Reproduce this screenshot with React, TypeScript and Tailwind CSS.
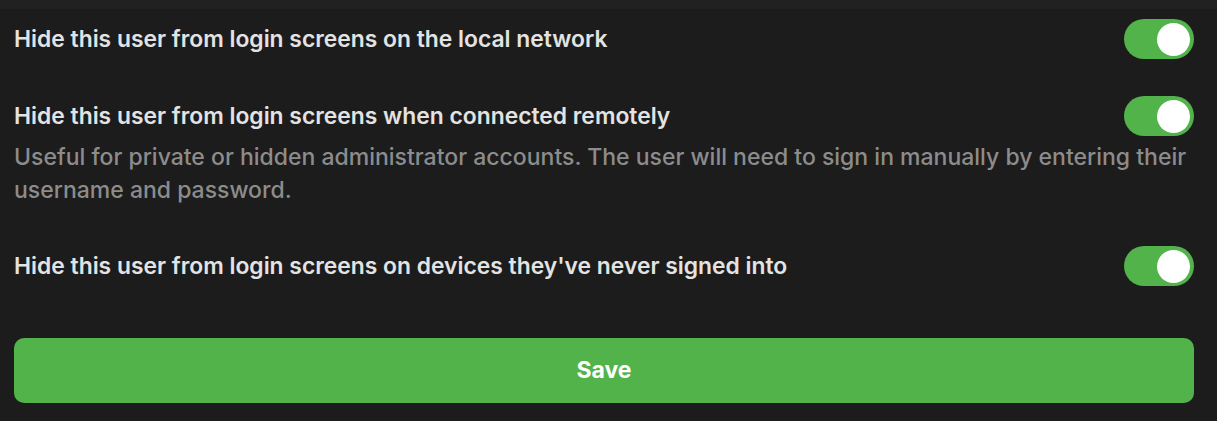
import React, { useState } from 'react';

interface ToggleProps {
  checked: boolean;
  onChange: (v: boolean) => void;
}

const Toggle: React.FC<ToggleProps> = ({ checked, onChange }) => (
  <button
    type="button"
    onClick={() => onChange(!checked)}
    className={`relative flex h-[40px] w-[70px] shrink-0 items-center rounded-full px-[4px] ${
      checked ? 'justify-end bg-[#52b34b]' : 'justify-start bg-[#444444]'
    }`}
  >
    <span className="block h-[33px] w-[33px] rounded-full bg-white" />
  </button>
);

export default function App() {
  const [local, setLocal] = useState(true);
  const [remote, setRemote] = useState(true);
  const [never, setNever] = useState(true);

  return (
    <div
      className="min-h-[421px] w-full bg-[#1c1c1c] text-[#e3e3e3]"
      style={{ fontFamily: 'Inter, "Noto Sans", sans-serif' }}
    >
      <div className="h-[9px] bg-[#212121]" />
      <div className="px-[14px] pt-[10px]">
        <div className="flex items-center justify-between pr-[9px]">
          <span className="text-[22.85px] font-semibold">Hide this user from login screens on the local network</span>
          <Toggle checked={local} onChange={setLocal} />
        </div>

        <div className="mt-[37px]">
          <div className="flex items-center justify-between pr-[9px]">
            <span className="text-[22.85px] font-semibold">Hide this user from login screens when connected remotely</span>
            <Toggle checked={remote} onChange={setRemote} />
          </div>
          <p className="mt-[5px] pr-[4px] text-[23px] font-medium leading-[33px] text-[#8c8c8c]">
            Useful for private or hidden administrator accounts. The user will need to sign in manually by entering their
            username and password.
          </p>
        </div>

        <div className="mt-[39px] flex items-center justify-between pr-[9px]">
          <span className="text-[22.85px] font-semibold">Hide this user from login screens on devices they've never signed into</span>
          <Toggle checked={never} onChange={setNever} />
        </div>

        <button
          type="button"
          className="mt-[52px] mr-[9px] flex h-[65px] w-[calc(100%-9px)] items-center justify-center rounded-[10px] bg-[#52b34b] text-[23px] font-bold text-white"
        >
          Save
        </button>
      </div>
    </div>
  );
}
